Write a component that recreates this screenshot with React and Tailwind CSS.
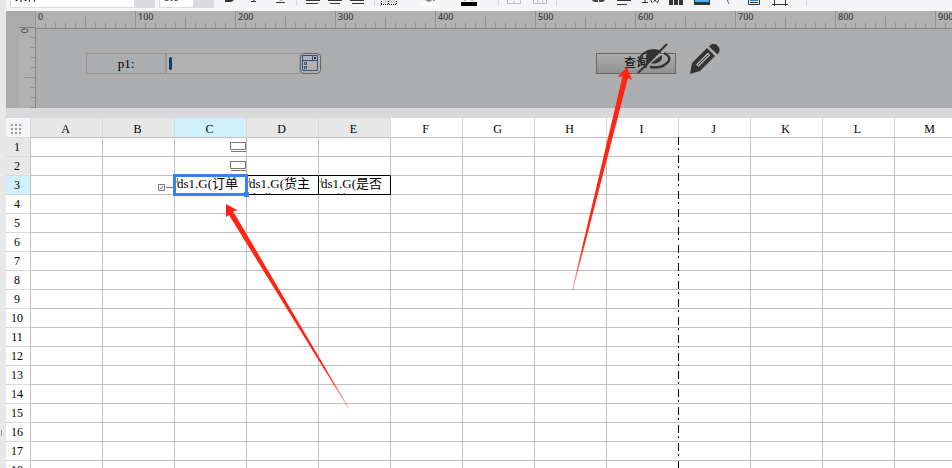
import clsx from "clsx";

const COLUMNS = ["A", "B", "C", "D", "E", "F", "G", "H", "I", "J", "K", "L", "M"];
const ROWS = Array.from({ length: 18 }, (_, i) => i + 1);
const USED_COLUMNS = ["A", "B", "D", "E"];

const CELLS = {
  C3: "ds1.G(订单ID)",
  D3: "ds1.G(货主名称)",
  E3: "ds1.G(是否已付)",
};

const Tool = ({ label, className, width, children }) => (
  <button type="button" aria-label={label} className={clsx("shrink-0", className)}>
    <svg width={width} height="16" viewBox={`0 0 ${width} 16`} fill="none" stroke="#333" className="block">
      {children}
    </svg>
  </button>
);

const Separator = ({ className }) => (
  <span className={clsx("w-px h-3 mb-[5px] shrink-0 bg-[#d9d9dd]", className)} />
);

const Picker = ({ label, value, className }) => (
  <div className={clsx("flex h-[22px] mb-[3px] shrink-0 border border-[#dadadf] bg-white", className)}>
    <select
      aria-label={label}
      defaultValue={value}
      className="flex-1 min-w-0 appearance-none pl-1 text-xs leading-5 outline-none"
    >
      <option>{value}</option>
    </select>
    <span className="w-5 flex items-center justify-center bg-[#dadadf]">
      <svg width="6" height="8" viewBox="0 0 6 8">
        <path d="M0 2h6L3 7z" fill="#b4b4ba" />
      </svg>
    </span>
  </div>
);

const Toolbar = () => (
  <header className="h-[11px] shrink-0 overflow-hidden flex items-end bg-[#f5f5f8]">
    <Picker label="Font" value="宋体" className="ml-1 w-[145px]" />
    <Picker label="Font size" value="9.0" className="ml-1 w-[55px]" />
    <Tool label="Bold" className="ml-[11px]" width={9}>
      <path d="M1 0v6h4q3 0 3-3" strokeWidth="2" />
    </Tool>
    <Tool label="Italic" className="ml-4" width={8}>
      <path d="M4 0v6M1 6.5h5" />
    </Tool>
    <Tool label="Underline" className="ml-[18px]" width={10}>
      <path d="M2 0v3q0 2 3 2t3-2V0M0 7.5h9" />
    </Tool>
    <Separator className="ml-2.5" />
    <Tool label="Align left" className="ml-[9px]" width={14}>
      <path d="M0 5.5h14M0 8.5h12" />
    </Tool>
    <Tool label="Align center" className="ml-2" width={14}>
      <path d="M0 5.5h14M2 8.5h10" />
    </Tool>
    <Tool label="Align right" className="ml-2" width={14}>
      <path d="M0 5.5h14M2 8.5h12" />
    </Tool>
    <Separator className="ml-2.5" />
    <Tool label="Borders" className="ml-1.5" width={16}>
      <path d="M2 0h12v8H2z" fill="#ddd" stroke="none" />
      <path d="M.5 0v9M15.5 0v9M7.5 0v9M0 9.5h16" stroke="#000" strokeDasharray="1 1" />
    </Tool>
    <Tool label="Fill color" className="ml-[23px]" width={17}>
      <path d="M0 7h16v4H0z" fill="#fff" stroke="none" />
      <path d="M6 2q-1 4 3 4t2-4M14 2v4" />
    </Tool>
    <Tool label="Font color" className="ml-[23px]" width={17}>
      <path d="M4 5.5h2M11 5.5h2" stroke="#bbb" />
      <path d="M1 7h16v4H1z" fill="#000" stroke="none" />
    </Tool>
    <Separator className="ml-[21px]" />
    <Tool label="Merge cells" className="ml-2" width={14}>
      <path d="M.5 0v8.5h13V0M0 4.5h14M7 6v2" stroke="#bfbfc3" />
    </Tool>
    <Tool label="Split cells" className="ml-3" width={14}>
      <path d="M.5 0v8.5h13V0M0 4.5h14M5 4v4M9.5 4v4" stroke="#bfbfc3" />
    </Tool>
    <Separator className="ml-[9px]" />
    <Tool label="Text" className="ml-[35px]" width={13}>
      <path d="M1 4q0 2 2 2t2-2V0v7M8 0v6h2q2 0 2-3t-2-2" strokeWidth="2" stroke="#444" />
    </Tool>
    <Tool label="Rich text" className="ml-3" width={14}>
      <path d="M0 5.5h14M0 9.5h10" />
    </Tool>
    <Tool label="Formula" className="ml-[11px]" width={17}>
      <path d="M3 0v7M0 7.5h6M10 2q-2 3 0 6M11.5 3l3 4M14.5 3l-3 4M15.5 2q2 3 0 6" />
    </Tool>
    <Tool label="Chart" className="ml-2.5" width={14}>
      <path d="M0 2h4v8H0zM5 0h4v10H5zM10 3h4v7h-4z" fill="#333" stroke="none" />
    </Tool>
    <Tool label="Image" className="ml-[11px]" width={16}>
      <path d="M0 0h16v10H0z" fill="#333" stroke="none" />
      <path d="M1 0h14v7H1z" fill="#3fb8f5" stroke="none" />
    </Tool>
    <Tool label="Slanted line" className="ml-4" width={5}>
      <path d="M0 2l3 7" stroke="#666" />
    </Tool>
    <Tool label="Subreport" className="ml-[17px]" width={12}>
      <path d="M.5 0v9.5h11V0" />
      <path d="M2 5h8" stroke="#1683d8" strokeWidth="2" />
      <path d="M2 7.5h8" />
    </Tool>
    <Tool label="Widget" className="ml-3" width={16}>
      <path d="M2.5 0v11M13.5 0v11M0 9.5h16" />
    </Tool>
    <Separator className="ml-[18px]" />
  </header>
);

// One tick every 10px, a taller one every 50px and a label every 100px
const HorizontalRuler = () => (
  <div className="h-[17px] flex overflow-hidden bg-[#b1b1b1]">
    {Array.from({ length: 20 }, (_, i) => (
      <div key={i} className="relative w-[50px] shrink-0 flex items-end">
        {[0, 1, 2, 3, 4].map((n) => (
          <span
            key={n}
            className={clsx(
              "w-2.5 border-l border-[#949494]",
              n > 0 && "h-[5px]",
              n === 0 && (i % 2 ? "h-[11px]" : "h-full")
            )}
          />
        ))}
        {i % 2 === 0 && (
          <span className="absolute left-[3px] top-px font-['Noto_Sans'] font-medium text-[9px] leading-2.5 text-[#3c3c3c]">
            {i * 50}
          </span>
        )}
      </div>
    ))}
  </div>
);

const VerticalRuler = () => (
  <div className="relative w-4 shrink-0 flex flex-col items-end overflow-hidden bg-[#b1b1b1]">
    {[1, 2, 3, 4, 5, 6, 7, 8].map((n) => (
      <span key={n} className={clsx("h-2.5 shrink-0 border-b border-[#949494]", n === 5 ? "w-[11px]" : "w-[5px]")} />
    ))}
    <span className="absolute left-0.5 top-0 font-['Noto_Sans'] text-[9px] leading-2 text-[#3c3c3c] [writing-mode:sideways-lr]">
      0
    </span>
  </div>
);

const HiddenIcon = () => (
  <svg width="34" height="32" viewBox="0 0 34 32" fill="none" stroke="#333" className="block">
    <path d="M5 21Q0 17 5 12Q11 6 20 7.500Q22 8 24 9" strokeWidth="2" />
    <path d="M11 8Q17 5 23 8L11 21Q7 13 11 8z" fill="#333" stroke="none" />
    <path d="M27 10Q35 14 31 19Q25 26 13 24" strokeWidth="2.500" />
    <path d="M25 12Q26 18 20 20Q17 21 14 20z" fill="#333" stroke="none" />
    <path d="M1 30L30 1" strokeWidth="2" />
  </svg>
);

const PencilIcon = () => (
  <svg width="32" height="32" viewBox="0 0 32 32" className="block">
    <path d="M1 31L3 20L18 5L26 13L11 28z" fill="#333" />
    <path d="M7 21.500L19 9.500L21.500 12L9.500 24z" fill="#acadaf" />
    <path d="M9 22L19.500 11.500" stroke="#333" />
    <path d="M18.500 4L27.500 13" stroke="#acadaf" strokeWidth="1.500" />
    <path d="M20 3.500Q23 -1 28 2Q33 7 28.500 11.500z" fill="#333" />
  </svg>
);

const ParameterPane = () => (
  <section className="h-[97px] shrink-0 flex overflow-hidden bg-[#ababab]">
    <div className="ml-[13px] flex flex-col">
      <div className="h-4 shrink-0" />
      <div className="flex flex-1 border-t border-[#7f7f7f]">
        <VerticalRuler />
      </div>
    </div>
    <div className="flex-1 min-w-0 flex flex-col">
      <HorizontalRuler />
      <form
        className="flex-1 flex items-start pt-6 pl-[50px] border-l border-t border-[#858585] bg-[#acadaf]"
        onSubmit={(e) => e.preventDefault()}
      >
        <label
          htmlFor="p1"
          className="w-20 h-[21px] shrink-0 border border-[#939393] text-center text-[13px] leading-5"
        >
          p1:
        </label>
        <div className="w-[134px] h-[21px] shrink-0 flex items-center border border-[#999] bg-[#b1b1b1] pl-0.5">
          <span className="w-[3px] h-[13px] rounded-sm bg-[#0c3f6b]" />
          <input id="p1" className="flex-1 min-w-0 h-full bg-transparent pl-1 text-xs outline-none" />
        </div>
        <button
          type="button"
          aria-label="Choose value"
          className="w-[21px] h-[21px] shrink-0 flex items-center justify-center rounded-sm border border-[#666] bg-[#b1b1b1]"
        >
          <svg width="17" height="17" viewBox="0 0 17 17" fill="none" stroke="#354f7c">
            <path d="M.5 .5h15v15H.5zM.5 5.5h15M10.5 .5v5M2.5 7.5h2v2h-2zM2.5 11.5h2v2h-2z" />
            <path d="M12 2h2v2h-2z" fill="#14284f" stroke="none" />
          </svg>
        </button>
        <div className="relative ml-[275px] shrink-0">
          <button
            type="submit"
            className="block w-20 h-[21px] border border-[#666] bg-linear-to-b from-[#acacac] to-[#929292] text-xs leading-[19px]"
          >
            查询
          </button>
          <div className="absolute -top-2.5 left-[41px] flex gap-[18px]">
            <button type="button" aria-label="Hide parameter pane">
              <HiddenIcon />
            </button>
            <button type="button" aria-label="Edit parameter pane">
              <PencilIcon />
            </button>
          </div>
        </div>
      </form>
    </div>
  </section>
);

const ParentMark = () => (
  <svg width="16" height="10" viewBox="0 0 16 10" fill="none" stroke="#777" className="block ml-auto">
    <path d="M.5 .5h15v7H.5zM1 9.500h15" />
  </svg>
);

const ExpandLink = () => (
  <svg width="17" height="9" viewBox="0 0 17 9" fill="none" stroke="#777" className="block ml-auto mt-1">
    <path d="M1.5 1.5h6v6h-6zM3 5l1 1l2-3M9 4.5h8" />
  </svg>
);

const DataCell = ({ text, selected }) => (
  <div className="relative h-[18px]">
    <div className="h-[18px] overflow-hidden pl-0.5 text-[13px] leading-4 break-words">{text}</div>
    <svg width="6" height="6" viewBox="0 0 6 6" className="absolute left-0 top-0.5">
      <path d="M2.5 0v5M0 2.500l2.500 2.500l2.500-2.500" stroke="#777" fill="none" />
    </svg>
    {selected && (
      <div className="absolute -top-0.5 -left-0.5 w-[75px] h-[22px] border-3 border-[#3583ee]">
        <span className="absolute -right-1 -bottom-1 size-[5px] bg-[#3583ee]" />
      </div>
    )}
  </div>
);

const cellContent = (id) => {
  if (id === "C1" || id === "C2") return <ParentMark />;
  if (id === "B3") return <ExpandLink />;
  if (CELLS[id]) return <DataCell text={CELLS[id]} selected={id === "C3"} />;
  return null;
};

const Sheet = () => (
  <main className="relative flex-1 min-h-0 overflow-hidden bg-white">
    <table className="border-separate border-spacing-0 text-xs leading-[18px]">
      <thead>
        <tr>
          <th aria-label="Select all" className="p-0 bg-[#f5f5f8] border-r border-b border-[#d9d9dc]">
            <svg width="24" height="19" viewBox="0 0 24 19" className="block">
              <path
                d="M5 7h10M5 11h10M5 15h10"
                stroke="#999"
                strokeWidth="2"
                strokeDasharray="2 2"
              />
            </svg>
          </th>
          {COLUMNS.map((col) => (
            <th
              key={col}
              scope="col"
              className={clsx(
                "p-0 font-normal border-r border-b border-r-[#dadadd] border-b-[#c0c0c0]",
                col === "C" && "bg-[#d0f0fc]",
                USED_COLUMNS.includes(col) && "bg-[#e7e7e7]"
              )}
            >
              <div className="w-[71px] h-[19px] pt-0.5 pr-0.5">{col}</div>
            </th>
          ))}
        </tr>
      </thead>
      <tbody>
        {ROWS.map((row) => (
          <tr key={row}>
            <th
              scope="row"
              className={clsx(
                "p-0 font-normal border-r border-b border-r-[#c0c0c0] border-b-[#d9d9dc]",
                row < 3 && "bg-[#e7e7e7]",
                row === 3 && "bg-[#d0f0fc]"
              )}
            >
              <div className="h-[18px] pr-0.5">{row}</div>
            </th>
            {COLUMNS.map((col) => {
              const id = col + row;
              const boxed = id === "C3" || id === "D3" || id === "E3";
              return (
                <td
                  key={id}
                  className={clsx(
                    "p-0 border-r border-b align-middle",
                    boxed ? "border-black" : "border-r-[#c0c0c0]",
                    !boxed && (id === "D2" || id === "E2" ? "border-b-black" : "border-b-[#c0c0c0]")
                  )}
                >
                  {cellContent(id)}
                </td>
              );
            })}
          </tr>
        ))}
      </tbody>
    </table>
    {/* page break */}
    <span className="absolute left-[672px] top-[19px] bottom-0 w-px bg-[repeating-linear-gradient(to_bottom,#000_0_8px,#fff_8px_11px,#000_11px_13px,#fff_13px_18px)]" />
  </main>
);

const Arrows = () => (
  <svg width="700" height="420" viewBox="0 0 700 420" className="absolute left-0 top-0 pointer-events-none">
    <defs>
      <linearGradient id="fadeQuery" gradientUnits="userSpaceOnUse" x1="627" y1="67" x2="573" y2="288">
        <stop offset="0.8" stopColor="#ff2414" />
        <stop offset="1" stopColor="#ff2414" stopOpacity="0.4" />
      </linearGradient>
      <linearGradient id="fadeCell" gradientUnits="userSpaceOnUse" x1="226" y1="204" x2="348" y2="406">
        <stop offset="0.8" stopColor="#ff2414" />
        <stop offset="1" stopColor="#ff2414" stopOpacity="0.4" />
      </linearGradient>
    </defs>
    <path d="M627 67L632 80L628 78L573 290L572 290L622.500 76.500L617.500 77z" fill="url(#fadeQuery)" />
    <path d="M226 204L238 210.500L233 211L349 408L348 408L229 215L226 217z" fill="url(#fadeCell)" />
  </svg>
);

export default function App() {
  return (
    <div className="relative h-screen flex overflow-hidden bg-[#e7e7e7] font-['Liberation_Serif','Noto_Sans_CJK_SC',serif] text-black">
      <aside className="w-1.5 shrink-0 flex flex-col justify-end pb-8 pl-px">
        <span className="w-px h-1.5 bg-[#999]" />
      </aside>
      <div className="flex-1 min-w-0 flex flex-col">
        <Toolbar />
        <ParameterPane />
        <div className="h-2.5 shrink-0 bg-[#d9d9dc]" />
        <Sheet />
      </div>
      <Arrows />
    </div>
  );
}
